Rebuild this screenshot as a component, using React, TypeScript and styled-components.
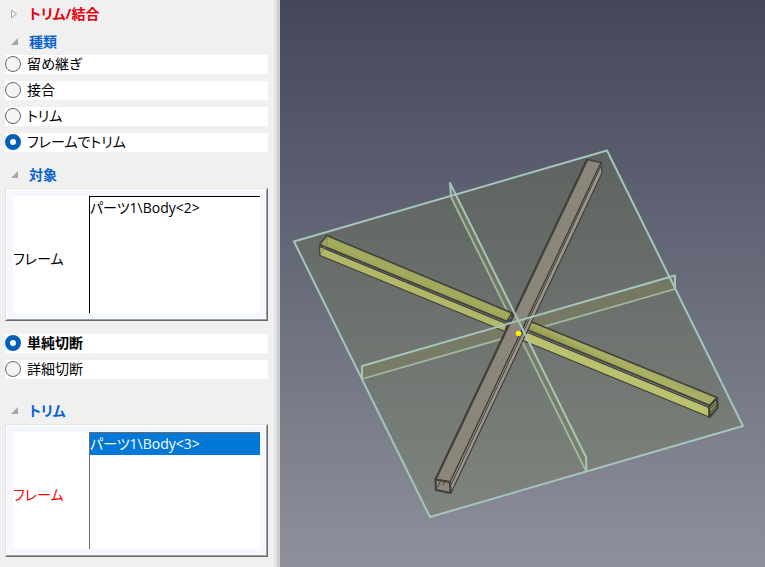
import React, { useState } from "react";
import styled, { createGlobalStyle } from "styled-components";

const GlobalStyle = createGlobalStyle`
  *, *::before, *::after { box-sizing: border-box; }
  html, body, #root { height: 100%; }
  body {
    margin: 0;
    background: #f0f0f0;
    color: #000;
    font-family: "Open Sans", "Noto Sans CJK JP", sans-serif;
    font-size: 14px;
    font-feature-settings: "palt";
  }
`;

const Layout = styled.div`
  display: flex;
  min-height: 100%;
`;

const Panel = styled.aside`
  flex: 0 0 280px;
  padding: 0 9px 0 5px;
  border-right: 3px solid #cdcdcd;
  box-shadow: inset -3px 0 0 #e3e3e3;
`;

const SectionHeader = styled.button<{ $tone: "alert" | "accent"; $height: number }>`
  display: flex;
  align-items: center;
  gap: 10px;
  width: 100%;
  height: ${(p) => p.$height}px;
  padding: 0 0 0 5px;
  border: 0;
  background: none;
  font: inherit;
  font-weight: 700;
  font-feature-settings: inherit;
  line-height: 20px;
  color: ${(p) => (p.$tone === "alert" ? "#e8000d" : "#0a62cf")};
  text-align: left;
`;

const Arrow = styled.svg`
  flex: none;
  width: 9px;
  height: 10px;
`;

const RadioGroup = styled.fieldset`
  display: flex;
  flex-direction: column;
  gap: 7px;
  margin: 0;
  padding: 0;
  border: 0;
`;

const RadioRow = styled.label<{ $bold?: boolean }>`
  display: flex;
  align-items: center;
  gap: 6px;
  height: 19px;
  padding-bottom: 1px;
  background: #fff;
  font-weight: ${(p) => (p.$bold ? 700 : 400)};
  line-height: 18px;
`;

const Radio = styled.input`
  appearance: none;
  flex: none;
  width: 16px;
  height: 16px;
  margin: 0;
  border: 1px solid #666;
  border-radius: 50%;
  background: #f5f5f5;

  &:checked {
    border: 5px solid #005fb8;
    background: #fff;
  }
`;

const Frame = styled.div`
  border: 1px solid;
  border-color: #e3e3e3 #696969 #696969 #e3e3e3;
`;

const FrameInner = styled.div`
  padding: 6px;
  border: 1px solid;
  border-color: #fff #a0a0a0 #a0a0a0 #fff;
  background: #f4f8fe;
`;

const FieldRow = styled.div`
  display: grid;
  grid-template-columns: 76px 1fr;
  min-height: 117px;
  background: #fff;
`;

const FieldLabel = styled.span<{ $alert?: boolean }>`
  align-self: center;
  padding-top: 8px;
  line-height: 20px;
  color: ${(p) => (p.$alert ? "#f00" : "#000")};
`;

const ListBox = styled.ul<{ $active?: boolean }>`
  margin: 0;
  padding: 0;
  list-style: none;
  border: solid ${(p) => (p.$active ? "#6b6b6b" : "#000")};
  border-width: 1px 0 0 1px;
`;

const Item = styled.li<{ $selected?: boolean }>`
  height: 22px;
  line-height: 22px;
  color: ${(p) => (p.$selected ? "#fff" : "#000")};
  background: ${(p) => (p.$selected ? "#0078d7" : "transparent")};
`;

const Spacer = styled.div<{ $size: number }>`
  height: ${(p) => p.$size}px;
`;

const Viewport = styled.main`
  flex: 1;
  min-width: 0;
  display: flex;
  background: linear-gradient(#434759, #8e909c);
`;

const Scene = styled.svg`
  width: 100%;
  height: auto;
`;

type HeaderProps = { title: string; tone?: "alert" | "accent"; open?: boolean; height: number };

function Header({ title, tone = "accent", open = true, height }: HeaderProps) {
  return (
    <SectionHeader type="button" $tone={tone} $height={height} aria-expanded={open}>
      <Arrow viewBox="0 0 9 10" aria-hidden="true">
        {open ? (
          <path d="M8 1v7H1z" fill="#a6a6a6" />
        ) : (
          <path d="M1.5 1v8L6.500 5z" fill="none" stroke="#a6a6a6" />
        )}
      </Arrow>
      {title}
    </SectionHeader>
  );
}

type RadiosProps = {
  name: string;
  label: string;
  options: string[];
  initial: string;
  boldSelected?: boolean;
};

function Radios({ name, label, options, initial, boldSelected }: RadiosProps) {
  const [value, setValue] = useState(initial);
  return (
    <RadioGroup aria-label={label}>
      {options.map((o) => (
        <RadioRow key={o} $bold={boldSelected && o === value}>
          <Radio type="radio" name={name} checked={o === value} onChange={() => setValue(o)} />
          {o}
        </RadioRow>
      ))}
    </RadioGroup>
  );
}

function BodyField({ id, item, active }: { id: string; item: string; active?: boolean }) {
  return (
    <Frame>
      <FrameInner>
        <FieldRow>
          <FieldLabel id={id} $alert={active}>フレーム</FieldLabel>
          <ListBox role="listbox" aria-labelledby={id} $active={active}>
            <Item role="option" aria-selected={!!active} $selected={active}>{item}</Item>
          </ListBox>
        </FieldRow>
      </FrameInner>
    </Frame>
  );
}

function Model() {
  return (
    <Scene viewBox="280 0 485 567" preserveAspectRatio="xMidYMid meet" role="img" aria-label="3D">
      <defs>
        <linearGradient id="leftTop" gradientUnits="userSpaceOnUse" x1="412" y1="285" x2="419" y2="268">
          <stop offset="0" stopColor="#959b54" />
          <stop offset="0.4" stopColor="#a5ab5d" />
          <stop offset="1" stopColor="#9fa55a" />
        </linearGradient>
        <linearGradient id="rightTop" gradientUnits="userSpaceOnUse" x1="615" y1="369" x2="622" y2="354">
          <stop offset="0" stopColor="#95994c" />
          <stop offset="0.45" stopColor="#abb065" />
          <stop offset="1" stopColor="#a5aa62" />
        </linearGradient>
      </defs>

      <path d="M294 241L607 150L743 426L430 517Z" fill="rgb(108,120,72)" fillOpacity="0.3" />
      <path d="M450 183L586 457L587 471L451 197Z" fill="#80815a" fillOpacity="0.5" />
      <path d="M362 366L675 275V289L362 379Z" fill="#80815a" fillOpacity="0.5" />
      <g fill="none" stroke="#9fba9f" strokeWidth="1.8">
        <path d="M451 197L586 471" />
        <path d="M362 379L675 289" />
      </g>

      <g strokeLinejoin="round" strokeLinecap="round" stroke="#3f403c">
        <path d="M327 235.500L512 313L507 321.500L319.500 244.500Z" fill="url(#leftTop)" strokeWidth="1.600" />
        <path d="M319.500 246.500L507 324L505 331.500L320 255.500Z" fill="#b3b869" strokeWidth="1.200" />
        <path d="M327 237V244L321 253" fill="none" stroke="#7c8048" strokeWidth="0.800" />

        <path d="M527 320L717 397.500L710 405.500L524 328.500Z" fill="url(#rightTop)" strokeWidth="1.600" />
        <path d="M524 331L710 408L709 417L523 340.500Z" fill="#bcc16e" strokeWidth="1.200" />
        <path d="M717 398L717.500 408L709.500 417L709 406.500Z" fill="#8b9052" strokeWidth="2.200" />
        <path d="M711 412L716 406M711 408L715 404" strokeWidth="1" />

        <path d="M601 162L602 173L451 493L450 482Z" fill="#9d948b" strokeWidth="1.200" />
        <path d="M587 159.500L601 162.500L450 482L435.500 479.500Z" fill="#8b8679" strokeWidth="1.300" />
        <path d="M587 160L435.500 479.500" strokeWidth="2.200" />
        <path d="M601 166L451.500 484" strokeWidth="1" />
        <path d="M435.500 479.500L450 482L450.500 493L436 490Z" fill="#8b8679" strokeWidth="2.200" />
        <path d="M438 487L440 482M443 485L444.500 482" fill="none" strokeWidth="1" />
      </g>

      <g fill="none" stroke="#a5c5bd" strokeWidth="2" strokeLinejoin="round">
        <path d="M294 241.500L607 150.500L743 426L430 517Z" />
        <path d="M451 197L450 183L586 457L586.500 471" />
        <path d="M362 379V366L675 275.500V289" />
      </g>
      <circle cx="518.500" cy="333.500" r="2.700" fill="#ffee00" />
    </Scene>
  );
}

export default function App() {
  return (
    <>
      <GlobalStyle />
      <Layout>
        <Panel>
          <Header title="トリム/結合" tone="alert" open={false} height={28} />
          <Header title="種類" height={27} />
          <Radios
            name="kind"
            label="種類"
            options={["留め継ぎ", "接合", "トリム", "フレームでトリム"]}
            initial="フレームでトリム"
          />
          <Spacer $size={9} />
          <Header title="対象" height={27} />
          <BodyField id="target-frame" item="パーツ1\Body<2>" />
          <Spacer $size={13} />
          <Radios
            name="cut"
            label="切断"
            options={["単純切断", "詳細切断"]}
            initial="単純切断"
            boldSelected
          />
          <Spacer $size={18} />
          <Header title="トリム" height={27} />
          <BodyField id="trim-frame" item="パーツ1\Body<3>" active />
        </Panel>
        <Viewport>
          <Model />
        </Viewport>
      </Layout>
    </>
  );
}
